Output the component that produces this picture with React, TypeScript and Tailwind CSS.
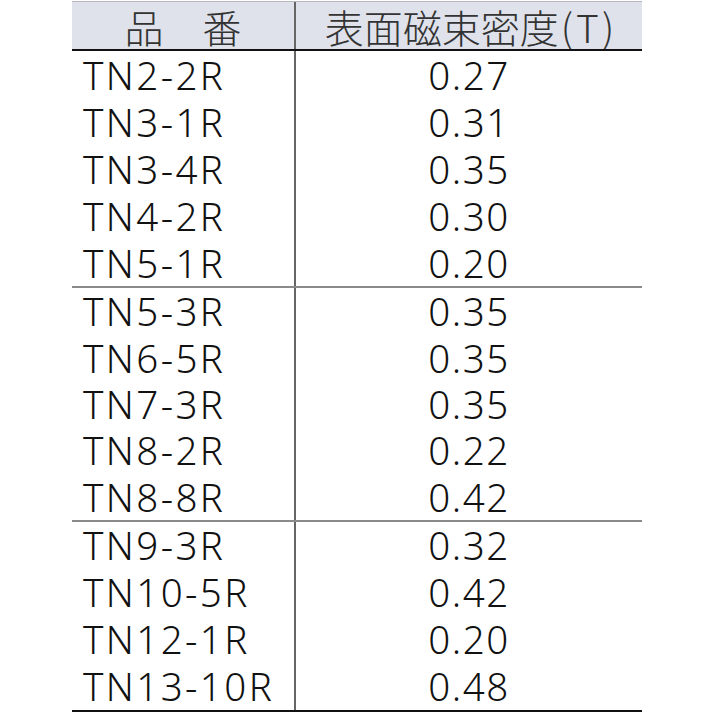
import React from "react";

const groups: { rows: [string, string][]; h: string }[] = [
  {
    h: "h-[47px]",
    rows: [
      ["TN2-2R", "0.27"],
      ["TN3-1R", "0.31"],
      ["TN3-4R", "0.35"],
      ["TN4-2R", "0.30"],
      ["TN5-1R", "0.20"],
    ],
  },
  {
    h: "h-[46.4px]",
    rows: [
      ["TN5-3R", "0.35"],
      ["TN6-5R", "0.35"],
      ["TN7-3R", "0.35"],
      ["TN8-2R", "0.22"],
      ["TN8-8R", "0.42"],
    ],
  },
  {
    h: "h-[47px]",
    rows: [
      ["TN9-3R", "0.32"],
      ["TN10-5R", "0.42"],
      ["TN12-1R", "0.20"],
      ["TN13-10R", "0.48"],
    ],
  },
];

export default function App() {
  return (
    <div className="w-[713px] h-[713px] bg-white pt-[1px] pl-[72px] overflow-hidden">
      <div className="w-[570px] flex flex-col">
        <div
          className="h-[48px] flex bg-[#dfe2ea] border-t border-[#b4b6bb] text-[#333] text-[39px] leading-[44px]"
          style={{ fontFamily: '"Noto Sans CJK JP", sans-serif', fontWeight: 300 }}
        >
          <div className="w-[224px] border-r-2 border-[#666] flex items-center justify-center">
            品　番
          </div>
          <div className="flex-1 flex items-center justify-center pl-[4px]">
            表面磁束密度<span className="tracking-[3px] pl-[2px]">(T)</span>
          </div>
        </div>
        <div className="h-[2px] bg-[#111]" />
        {groups.map((g, gi) => (
          <React.Fragment key={gi}>
            {gi > 0 && <div className="h-[2px] bg-[#8a8a8a]" />}
            {g.rows.map(([a, b]) => (
              <div
                key={a}
                className={`${g.h} flex text-[38.5px] leading-[44px] text-[#111]`}
                style={{ fontFamily: '"Noto Sans", sans-serif', fontWeight: 350 }}
              >
                <div className="w-[224px] border-r-2 border-[#666] flex items-center pl-[11px] tracking-[2.4px]">
                  {a}
                </div>
                <div className="flex-1 flex items-center justify-center tracking-[1.6px]">{b}</div>
              </div>
            ))}
          </React.Fragment>
        ))}
        <div className="h-[2px] bg-[#111]" />
      </div>
    </div>
  );
}
